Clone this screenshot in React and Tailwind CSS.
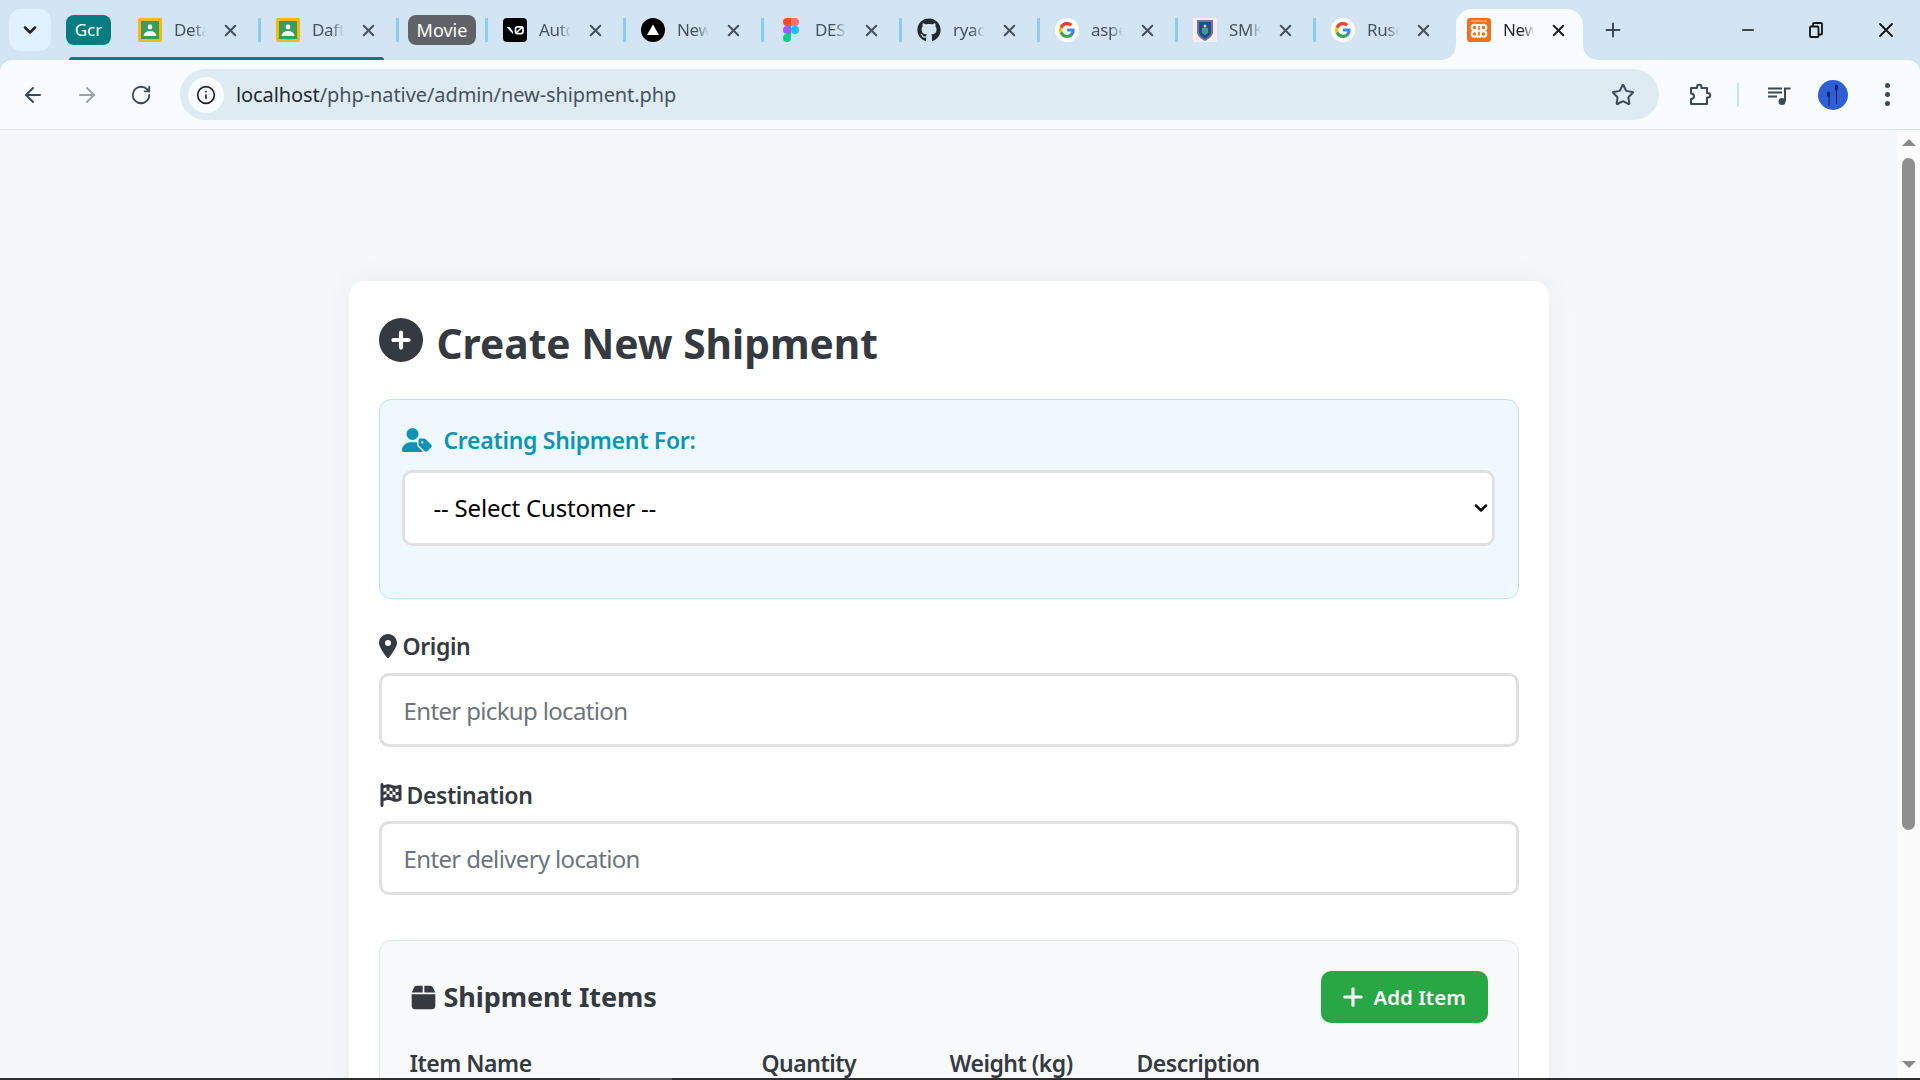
import React from 'react';
import { ArrowLeft, ArrowRight, ChevronDown, Info, Minus, Plus, RotateCw, Star, X } from 'lucide-react';
import { FaBox, FaCirclePlus, FaFlagCheckered, FaGithub, FaLocationDot, FaUserTag } from 'react-icons/fa6';

const ClassroomIcon = () => (
  <svg width="24" height="24" viewBox="0 0 24 24">
    <rect width="24" height="24" rx="2" fill="#f5b90f" />
    <rect x="3" y="3" width="18" height="18" fill="#3c9a5a" />
    <circle cx="12" cy="9" r="2.4" fill="#fff" />
    <path d="M5.500 18c.6-3.600 3.400-5 6.500-5s5.900 1.400 6.500 5z" fill="#fff" />
  </svg>
);

const V0Icon = () => (
  <svg width="24" height="24" viewBox="0 0 24 24">
    <rect width="24" height="24" rx="4" fill="#000" />
    <path d="M3.500 9h3l3.500 4.500V16z" fill="#fff" />
    <rect x="12.500" y="8.800" width="7.500" height="6.800" rx="2" fill="none" stroke="#fff" strokeWidth="1.700" />
    <path d="M13 15l6.500-6" stroke="#fff" strokeWidth="1.500" />
  </svg>
);

const TriangleIcon = () => (
  <svg width="24" height="24" viewBox="0 0 24 24">
    <circle cx="12" cy="12" r="12" fill="#000" />
    <path d="M12 6.500l6 10.500H6z" fill="#fff" />
  </svg>
);

const FigmaIcon = () => (
  <svg width="24" height="24" viewBox="0 0 24 24">
    <path d="M4 4a4 4 0 014-4h4v8H8a4 4 0 01-4-4z" fill="#f24e1e" />
    <path d="M12 0h4a4 4 0 010 8h-4z" fill="#ff7262" />
    <path d="M4 12a4 4 0 014-4h4v8H8a4 4 0 01-4-4z" fill="#a259ff" />
    <circle cx="16" cy="12" r="4" fill="#1abcfe" />
    <path d="M4 20a4 4 0 014-4h4v4a4 4 0 01-8 0z" fill="#0acf83" />
  </svg>
);

const GoogleIcon = () => (
  <svg width="24" height="24" viewBox="0 0 24 24">
    <circle cx="12" cy="12" r="12" fill="#fff" />
    <path d="M19.600 12.200c0-.6-.1-1.100-.2-1.600H12v3h4.300a3.700 3.700 0 01-1.600 2.400v2h2.600c1.500-1.400 2.300-3.400 2.300-5.800z" fill="#4285f4" />
    <path d="M12 20c2.200 0 4-.7 5.300-2l-2.600-2c-.7.500-1.600.8-2.700.8-2.100 0-3.900-1.400-4.500-3.300H4.800v2.100A8 8 0 0012 20z" fill="#34a853" />
    <path d="M7.500 13.500a4.800 4.800 0 010-3V8.400H4.800a8 8 0 000 7.200z" fill="#fbbc05" />
    <path d="M12 7.200c1.200 0 2.200.4 3.100 1.200l2.300-2.300A8 8 0 004.800 8.400l2.700 2.100C8.100 8.600 9.900 7.200 12 7.200z" fill="#ea4335" />
  </svg>
);

const ShieldIcon = () => (
  <svg width="24" height="24" viewBox="0 0 24 24">
    <rect width="24" height="24" fill="#f3eef2" />
    <path d="M4 2h16v12c0 4-4 7-8 9-4-2-8-5-8-9z" fill="#7d6f9c" />
    <path d="M6 4h12v10c0 3-3 5-6 7-3-2-6-4-6-7z" fill="#1e4f8a" />
    <path d="M9 10h6v5l-3 2-3-2z" fill="#3fa08a" />
    <circle cx="12" cy="8" r="1.500" fill="#e6d36a" />
  </svg>
);

const XamppIcon = () => (
  <svg width="24" height="24" viewBox="0 0 24 24">
    <rect width="24" height="24" rx="3" fill="#f0701f" />
    <path d="M4 3h16" stroke="#f9c9a4" strokeWidth="1" />
    <g fill="none" stroke="#fff" strokeWidth="2">
      <circle cx="7.500" cy="9.500" r="2.800" />
      <circle cx="16.500" cy="9.500" r="2.800" />
      <circle cx="7.500" cy="16" r="2.800" />
      <circle cx="16.500" cy="16" r="2.800" />
      <path d="M9 12.700h6M10 7h4M10 18.800h4" />
    </g>
  </svg>
);

const ExtensionIcon = () => (
  <svg width="24" height="24" viewBox="0 0 24 24" fill="none" stroke="#3c4a57" strokeWidth="2" strokeLinejoin="round">
    <path d="M3 5h6V4a2.200 2.200 0 014.400 0v1H19v5h1a2.200 2.200 0 010 4.400h-1V21H3v-5c2.500 0 3-1.200 3-2.800S5 10.500 3 10.500z" />
  </svg>
);

const QueueIcon = () => (
  <svg width="24" height="24" viewBox="0 0 24 24" fill="none" stroke="#3c4a57" strokeWidth="2">
    <path d="M1 5.500h14M1 9.500h14M1 13.500h9M18 18V5.500h5.500" />
    <circle cx="15" cy="18.500" r="3.500" fill="#3c4a57" stroke="none" />
  </svg>
);

const RestoreIcon = () => (
  <svg width="16" height="16" viewBox="0 0 16 16" fill="none" stroke="#111" strokeWidth="1.800">
    <rect x="2" y="4.500" width="8.500" height="10.500" rx="1" />
    <path d="M5 4.500V2a1 1 0 011-1h7a1 1 0 011 1v9.500a1 1 0 01-1 1h-2.500" />
  </svg>
);

const Avatar = () => (
  <svg width="30" height="30" viewBox="0 0 30 30">
    <circle cx="15" cy="15" r="15" fill="#2e5fd3" />
    <path d="M17 5c2-1.500 3.500 0 3 3l-1 3v13h-1V11c-1-1-1.500-4-1-6zM9 12c2-1.500 3.500 0 3 3l-.5 2v9h-1v-9c-1.500-1-2-3.500-1.500-5z" fill="#0d1a6b" />
  </svg>
);

const Tab = ({ icon, title, active }) => (
  <div className={`flex items-center shrink-0 ${active ? 'w-[127px] pl-[11px]' : 'w-[135px] pl-[15px]'}`}>
    <span className="w-6 h-6 shrink-0 flex items-center justify-center">{icon}</span>
    <span className={`ml-3 w-[32px] overflow-hidden whitespace-nowrap text-[17px] tracking-[-0.3px] [mask-image:linear-gradient(to_right,black_60%,transparent)] ${active ? 'text-[#1f2328]' : 'text-[#47525e]'}`}>
      {title}
    </span>
    <X size={19} strokeWidth={2.6} className={`shrink-0 ${active ? 'ml-[14px] text-[#1f2328]' : 'ml-[15px] text-[#47525e]'}`} />
  </div>
);

const Sep = () => <div className="w-[3px] h-6 bg-[#8ccbf5] shrink-0" />;

export default function App() {
  return (
    <div className="w-[1920px] h-[1080px] overflow-hidden flex flex-col bg-[#d3e5f3] font-['Noto_Sans',sans-serif]">
      {/* tab strip */}
      <div className="h-[60px] flex items-center shrink-0">
        <div className="ml-[9px] w-[42px] h-[42px] rounded-xl bg-[#e1f1ff] flex items-center justify-center">
          <ChevronDown size={20} strokeWidth={3} className="text-[#1f2328]" />
        </div>
        <div className="relative h-full flex items-center ml-[15px]">
          <div className="w-[45px] h-[30px] rounded-lg bg-[#047c82] text-white text-[17px] flex items-center justify-center">Gcr</div>
          <div className="ml-[12px] flex items-center">
            <Tab icon={<ClassroomIcon />} title="Detail" />
            <Sep />
            <Tab icon={<ClassroomIcon />} title="Daftar" />
          </div>
          <div className="absolute left-[3px] top-[57px] w-[315px] h-[3px] rounded-t-sm bg-[#047c82]" />
        </div>
        <Sep />
        <div className="ml-[9px] w-[68px] h-[30px] rounded-lg bg-[#5f6368] text-white text-[18px] flex items-center justify-center">Movie</div>
        <div className="ml-[9px] flex items-center">
          <Sep />
          <Tab icon={<V0Icon />} title="Auto" />
          <Sep />
          <Tab icon={<TriangleIcon />} title="New" />
          <Sep />
          <Tab icon={<FigmaIcon />} title="DESIGN" />
          <Sep />
          <Tab icon={<FaGithub size={24} className="text-[#24292f]" />} title="ryaciel" />
          <Sep />
          <Tab icon={<GoogleIcon />} title="asper" />
          <Sep />
          <Tab icon={<ShieldIcon />} title="SMK" />
          <Sep />
          <Tab icon={<GoogleIcon />} title="Rusdi" />
        </div>
        {/* active tab */}
        <div className="relative self-end ml-[5px] w-[127px] h-[51px] pb-[9px] bg-[#f8fbff] rounded-t-2xl flex items-center">
          <svg className="absolute -left-[16px] bottom-0" width="16" height="16" viewBox="0 0 16 16"><path d="M0 16C10 16 16 10 16 0v16z" fill="#f8fbff" /></svg>
          <svg className="absolute -right-[16px] bottom-0" width="16" height="16" viewBox="0 0 16 16"><path d="M16 16C6 16 0 10 0 0v16z" fill="#f8fbff" /></svg>
          <Tab active icon={<XamppIcon />} title="New" />
        </div>
        <Plus size={22} strokeWidth={2.2} className="ml-[19px] text-[#3c4a57]" />
        <div className="ml-auto flex items-center">
          <Minus size={18} strokeWidth={2.2} className="text-[#111] mr-[51px]" />
          <span className="mr-[50px]"><RestoreIcon /></span>
          <X size={24} strokeWidth={1.800} className="text-[#111] mr-[22px]" />
        </div>
      </div>

      {/* toolbar */}
      <div className="h-[70px] shrink-0 bg-[#f8fbff] rounded-t-xl border-b border-[#dde5ee] flex items-center">
        <ArrowLeft size={24} strokeWidth={2} className="ml-[21px] text-[#3c4a57]" />
        <ArrowRight size={24} strokeWidth={2} className="ml-[30px] text-[#9aa3ab]" />
        <RotateCw size={22} strokeWidth={2} className="ml-[31px] text-[#3c4a57]" />
        <div className="ml-[28px] w-[1479px] h-[51px] rounded-full bg-[#deebf3] flex items-center">
          <div className="ml-2 w-9 h-9 rounded-full bg-[#f8fbff] flex items-center justify-center">
            <Info size={20} strokeWidth={2} className="text-[#1f2328]" />
          </div>
          <div className="ml-[12px] text-[20px] text-[#47525e] tracking-[-0.09px]">
            <span className="text-[#1f2a33]">localhost</span>/php-native/admin/new-shipment.php
          </div>
          <Star size={24} strokeWidth={2} className="ml-auto mr-[24px] text-[#3c4a57]" />
        </div>
        <span className="ml-[29px]"><ExtensionIcon /></span>
        <div className="ml-[25px] w-[2px] h-[24px] bg-[#c4e2f7]" />
        <span className="ml-[28px]"><QueueIcon /></span>
        <span className="ml-[27px]"><Avatar /></span>
        <div className="ml-[37px] flex flex-col gap-[4px]">
          <span className="w-[5px] h-[5px] rounded-full bg-[#3c4a57]" />
          <span className="w-[5px] h-[5px] rounded-full bg-[#3c4a57]" />
          <span className="w-[5px] h-[5px] rounded-full bg-[#3c4a57]" />
        </div>
      </div>

      {/* page */}
      <div className="flex-1 min-h-0 flex bg-[#f5f7fb]">
        <div className="flex-1 min-w-0 overflow-hidden flex justify-center pt-[151px]">
          <div className="w-[1200px] h-fit bg-white rounded-[15px] shadow-[0_0_30px_rgba(0,0,0,0.05)] px-[30px] pt-[31px] pb-[30px] text-[#343a40]">
            <h1 className="flex items-center gap-[14px] h-[56px] text-[40.700px] leading-[56px] font-bold">
              <FaCirclePlus size={44} />
              <span className="pt-[5px]">Create New Shipment</span>
            </h1>

            <div className="mt-[31px] h-[200px] bg-[#f0f8ff] border border-[#bde3f5] rounded-xl pl-[22px] pr-[23px] pt-[22px]">
              <div className="flex items-center gap-[12px] text-[23px] tracking-[-0.3px] leading-[36px] font-semibold text-[#0d94b4]">
                <FaUserTag size={30} />
                <span>Creating Shipment For:</span>
              </div>
              <div className="relative mt-[12px]">
                <select className="w-full h-[76px] appearance-none bg-white border-[3px] border-[#e0e0e0] rounded-[10px] pl-[29px] text-[24px] tracking-[-0.2px] text-black">
                  <option>-- Select Customer --</option>
                </select>
                <ChevronDown size={20} strokeWidth={3} className="absolute right-[4px] top-[28px] text-[#111]" />
              </div>
            </div>

            <div className="mt-[30px] flex items-center gap-[6px] text-[23px] tracking-[-0.4px] leading-[34px] font-semibold">
              <FaLocationDot className="w-[18px] h-[24px]" />
              <span>Origin</span>
            </div>
            <input
              placeholder="Enter pickup location"
              className="mt-[10px] w-full h-[74px] block bg-white border-[3px] border-[#e0e0e0] rounded-[10px] px-[22px] text-[24px] tracking-[-0.65px] placeholder:text-[#6c757d]"
            />

            <div className="mt-[31px] flex items-center gap-[4px] text-[23px] tracking-[-0.4px] leading-[34px] font-semibold">
              <FaFlagCheckered size={24} />
              <span>Destination</span>
            </div>
            <input
              placeholder="Enter delivery location"
              className="mt-[9px] w-full h-[74px] block bg-white border-[3px] border-[#e0e0e0] rounded-[10px] px-[22px] text-[24px] tracking-[-0.65px] placeholder:text-[#6c757d]"
            />

            <div className="mt-[45px] bg-[#f8f9fa] border border-[#e2e4e6] rounded-xl px-[30px] pt-[30px]">
              <div className="flex items-center justify-between">
                <div className="flex items-center gap-[7px] text-[27px] tracking-[-0.1px] font-bold">
                  <FaBox size={27} />
                  <span>Shipment Items</span>
                </div>
                <button className="w-[167px] h-[52px] pl-[18px] bg-[#28a745] rounded-[10px] text-white text-[20.500px] font-semibold flex items-center gap-[7px]">
                  <Plus size={28} strokeWidth={2.7} />
                  <span>Add Item</span>
                </button>
              </div>
              <div className="mt-[22px] flex text-[23px] tracking-[-0.5px] leading-[36px] font-semibold pb-10">
                <div className="w-[352px]">Item Name</div>
                <div className="w-[188px]">Quantity</div>
                <div className="w-[187px]">Weight (kg)</div>
                <div>Description</div>
              </div>
            </div>
          </div>
        </div>
        {/* scrollbar */}
        <div className="w-[23px] shrink-0 bg-[#fbfbfb] flex flex-col items-center pt-[9px]">
          <div className="w-0 h-0 border-x-[7px] border-x-transparent border-b-[7px] border-b-[#8a8a8a]" />
          <div className="mt-[12px] w-[13px] h-[672px] rounded-full bg-[#8f8f8f]" />
          <div className="mt-auto mb-[10px] w-0 h-0 border-x-[7px] border-x-transparent border-t-[7px] border-t-[#8a8a8a]" />
        </div>
      </div>
      <div className="h-[2px] shrink-0 bg-[#2e2e2e] flex">
        <div className="ml-[600px] w-[72px] bg-[#555]" />
      </div>
    </div>
  );
}
